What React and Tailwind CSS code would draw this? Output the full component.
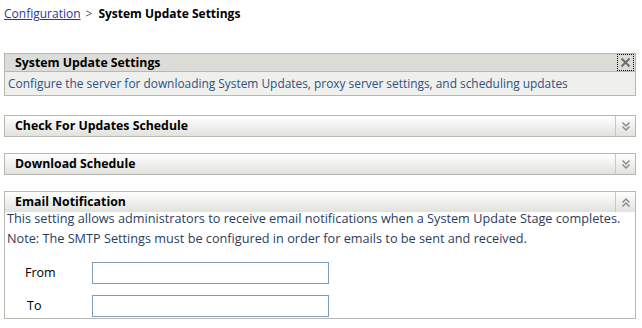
import { useState } from 'react';

const font = { fontFamily: '"Open Sans", "DejaVu Sans", sans-serif' };

function DoubleChevron({ up }) {
  return (
    <svg width="10" height="11" viewBox="0 0 10 11" className={up ? 'rotate-180' : ''}>
      <path d="M1.5 1.5 L5 5 L8.5 1.5" fill="none" stroke="#8c8c8c" strokeWidth="1.5" />
      <path d="M1.5 5.5 L5 9 L8.5 5.5" fill="none" stroke="#8c8c8c" strokeWidth="1.5" />
    </svg>
  );
}

function PanelHeader({ title, up }) {
  return (
    <div className="flex h-[20px] bg-gradient-to-b from-white to-[#e1e1de]">
      <div className="flex-1 pl-[10px] text-[12.3px] font-bold leading-[20px] text-black">{title}</div>
      <div className="flex w-[20px] items-center justify-center border-l border-[#c8c8c2]">
        <DoubleChevron up={up} />
      </div>
    </div>
  );
}

export default function App() {
  const [from, setFrom] = useState('');
  const [to, setTo] = useState('');

  return (
    <div className="h-[328px] w-[642px] bg-white pl-[4px] text-[12px]" style={font}>
      {/* Breadcrumb */}
      <div className="flex h-[53px] items-start pt-[5px] text-[12px]">
        <a href="#" className="text-[#1f3a9e] underline">Configuration</a>
        <span className="ml-[5px] text-[#555]">&gt;</span>
        <span className="ml-[6px] font-bold text-black">System Update Settings</span>
      </div>

      <div className="w-[632px]">
        {/* System Update Settings */}
        <div className="border border-[#b8b8b0]">
          <div className="flex h-[18px] items-center border-b border-[#b8b8b0] bg-[#dcdcd8]">
            <div className="flex-1 pl-[10px] text-[12.3px] font-bold leading-[18px] text-black">
              System Update Settings
            </div>
            <div className="mr-[1px] flex h-[17px] w-[17px] items-center justify-center border border-dotted border-black">
              <svg width="11" height="11" viewBox="0 0 11 11">
                <path d="M1.5 1.5 L9.5 9.5 M9.5 1.5 L1.5 9.5" stroke="#6a6a6a" strokeWidth="1.8" />
              </svg>
            </div>
          </div>
          <div className="h-[23px] bg-[#efefed] pl-[3px] text-[11.9px] leading-[22px] text-[#2b5386]">
            Configure the server for downloading System Updates, proxy server settings, and scheduling updates
          </div>
        </div>

        {/* Check For Updates Schedule */}
        <div className="mt-[19px] border border-[#b8b8b0]">
          <PanelHeader title="Check For Updates Schedule" />
        </div>

        {/* Download Schedule */}
        <div className="mt-[16px] border border-[#b8b8b0]">
          <PanelHeader title="Download Schedule" />
        </div>

        {/* Email Notification */}
        <div className="mt-[16px] border border-[#b8b8b0]">
          <PanelHeader title="Email Notification" up />
          <div className="-mt-[4px] pb-[1px] pl-[2px] text-[12.7px] leading-[20px] text-[#2b3d5c]">
            <p>This setting allows administrators to receive email notifications when a System Update Stage completes.</p>
            <p>Note: The SMTP Settings must be configured in order for emails to be sent and received.</p>
            <div className="mt-[14px] flex flex-col gap-[11px] text-[12.5px]">
              <label className="flex items-center">
                <span className="w-[85px] pl-[18px] text-black">From</span>
                <input
                  value={from}
                  onChange={(e) => setFrom(e.target.value)}
                  className="h-[22px] w-[237px] border border-[#7f9db9] bg-white px-1 outline-none"
                />
              </label>
              <label className="flex items-center">
                <span className="w-[85px] pl-[20px] text-black">To</span>
                <input
                  value={to}
                  onChange={(e) => setTo(e.target.value)}
                  className="h-[22px] w-[237px] border border-[#7f9db9] bg-white px-1 outline-none"
                />
              </label>
            </div>
          </div>
        </div>
      </div>
    </div>
  );
}
